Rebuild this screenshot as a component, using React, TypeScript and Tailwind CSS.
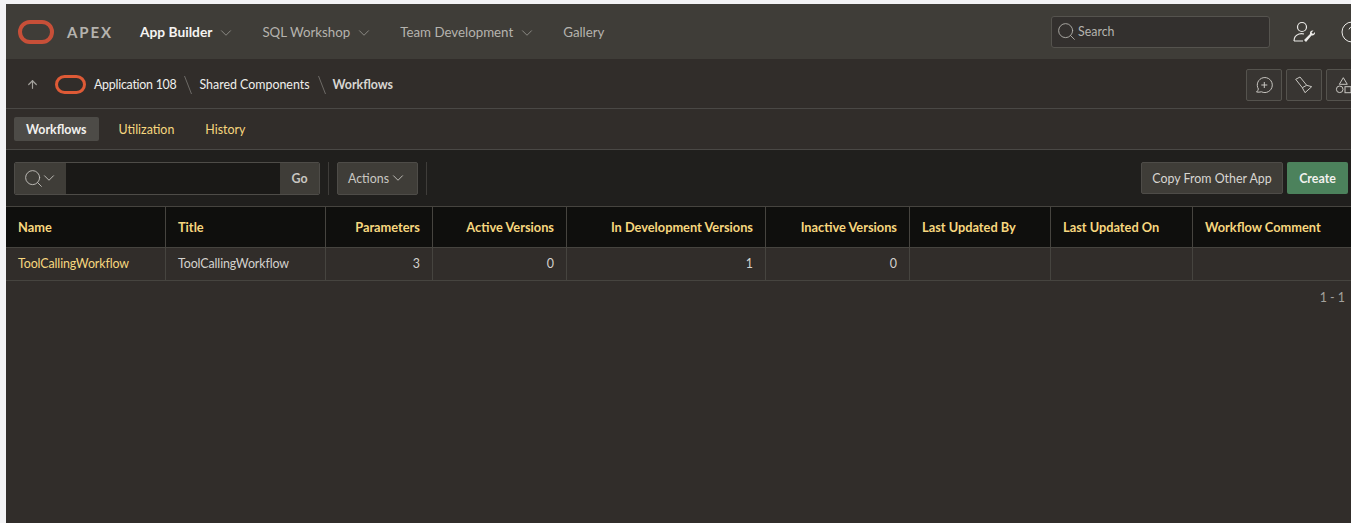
import { ChevronDown, CircleHelp, Search, ArrowUp } from "lucide-react";

const font = { fontFamily: 'Lato, "Noto Sans", sans-serif' };

const Logo = ({ className }: { className: string }) => (
  <div className={className} />
);

const NavItem = ({ label, active }: { label: string; active?: boolean }) => (
  <div className="flex items-center gap-[5px]">
    <span className={active ? "text-[13.75px] font-bold text-[#f5f4f2]" : "text-[#b5b3ae]"}>{label}</span>
    <ChevronDown size={18} strokeWidth={1} className="text-[#a3a19c]" />
  </div>
);

const Slash = () => (
  <svg width="8" height="20" viewBox="0 0 8 20" className="text-[#6e6b67]">
    <path d="M0.5 1 L7.5 19" stroke="currentColor" strokeWidth="1" fill="none" />
  </svg>
);

const IconBtn = ({ children }: { children: React.ReactNode }) => (
  <div className="flex h-[32px] w-[36px] shrink-0 items-center justify-center rounded-[2px] border border-[#55534e] bg-[#383532] text-[#c9c7c2]">
    {children}
  </div>
);

const columns = [
  { label: "Name", w: "w-[160px]" },
  { label: "Title", w: "w-[160px]" },
  { label: "Parameters", w: "w-[107px]", right: true },
  { label: "Active Versions", w: "w-[134px]", right: true },
  { label: "In Development Versions", w: "w-[199px]", right: true },
  { label: "Inactive Versions", w: "w-[144px]", right: true },
  { label: "Last Updated By", w: "w-[141px]" },
  { label: "Last Updated On", w: "w-[142px]" },
  { label: "Workflow Comment", w: "w-[160px]" },
];

const row = ["ToolCallingWorkflow", "ToolCallingWorkflow", "3", "0", "1", "0", "", "", ""];

export default function App() {
  return (
    <div className="h-[523px] w-[1351px] overflow-hidden bg-[#f3f3f5] pl-[6px] pt-[4px] text-[12.4px]" style={font}>
      <div className="flex h-[519px] w-[1345px] flex-col overflow-hidden bg-[#312d2a]">
        {/* top bar */}
        <header className="flex h-[55px] shrink-0 items-center bg-[#3f3d38] pl-[12px]">
          <Logo className="h-[24px] w-[36px] shrink-0 rounded-[12px] border-[4px] border-[#c74f38]" />
          <span className="ml-[13px] pt-[2px] text-[15px] font-bold tracking-[1.9px] text-[#b5b3ae]">APEX</span>
          <nav className="ml-[27px] flex items-center gap-[27px] pt-[2px] text-[13.3px]">
            <NavItem label="App Builder" active />
            <NavItem label="SQL Workshop" />
            <NavItem label="Team Development" />
            <span className="text-[#b5b3ae]">Gallery</span>
          </nav>
          <div className="ml-auto flex h-[32px] w-[219px] shrink-0 items-center rounded-[3px] border border-[#55534e] bg-[#33302e] pl-[4px] text-[#b5b3ae]">
            <Search size={21} strokeWidth={1} />
            <span className="ml-[1px] pt-[2px]">Search</span>
          </div>
          <svg width="24" height="24" viewBox="0 0 24 24" fill="none" className="ml-[22px] shrink-0 text-[#ecebe8]">
            <circle cx="10" cy="7" r="4.500" stroke="currentColor" strokeWidth="1.200" />
            <path d="M2 21c0-4 2-6 5-7 2-.5 3-.5 5 0M2 21h9" stroke="currentColor" strokeWidth="1.200" />
            <path d="M14 22l-2-2 6-6c-.5-2 1-4 3.500-3.500l-2 2 1.500 1.500 2-2c.5 2.500-1.500 4-3.500 3.500z" fill="currentColor" />
          </svg>
          <CircleHelp size={24} strokeWidth={1} className="-mr-[13px] ml-[24px] shrink-0 text-[#ecebe8]" />
        </header>

        {/* breadcrumb */}
        <div className="flex h-[50px] shrink-0 items-center border-b border-[#4a4845] pl-[20px] pt-[2px]">
          <ArrowUp size={13} strokeWidth={2.2} className="text-[#a3a19c]" />
          <Logo className="ml-[16px] h-[19px] w-[31px] shrink-0 rounded-[10px] border-[3px] border-[#de5a36]" />
          <span className="ml-[8px] pt-[2px] tracking-[-0.25px] text-[#f0efec]">Application 108</span>
          <div className="ml-[8px] mr-[7px]"><Slash /></div>
          <span className="pt-[2px] text-[#f0efec]">Shared Components</span>
          <div className="ml-[8px] mr-[7px]"><Slash /></div>
          <span className="pt-[2px] font-bold text-[#d8d6d2]">Workflows</span>
          <div className="-mr-[11px] ml-auto flex gap-[4px]">
            <IconBtn>
              <svg width="18" height="18" viewBox="0 0 18 18" fill="none" stroke="currentColor" strokeWidth="1">
                <path d="M1.500 16c1-.8 1.600-1.800 1.900-3A7.500 7.500 0 1 1 6.500 15.800C5 16.200 3 16.300 1.500 16z" />
                <path d="M9.300 6v6M6.300 9h6" />
              </svg>
            </IconBtn>
            <IconBtn>
              <svg width="20" height="20" viewBox="0 0 20 20" fill="none" stroke="currentColor" strokeWidth="1">
                <path d="M1.700 4.300 6 2l6.700 8.300 5 1.400-6.700 6-2.700-5z" />
                <path d="M8.300 12.700 12.700 10.300" />
              </svg>
            </IconBtn>
            <IconBtn>
              <svg width="20" height="20" viewBox="0 0 20 20" fill="none" stroke="currentColor" strokeWidth="1">
                <path d="M9.300 2.700 13.300 9.300H5.300z" />
                <circle cx="5.700" cy="14.300" r="3.300" />
                <rect x="11" y="11.700" width="6" height="6" />
              </svg>
            </IconBtn>
          </div>
        </div>

        {/* tabs */}
        <div className="flex h-[41px] shrink-0 items-center gap-[8px] border-b border-[#4a4845] pl-[8px] text-[#f7d77f]">
          <div className="flex h-[24px] items-center rounded-[2px] bg-[#4d4b47] px-[12px] pt-[2px] font-bold text-[#f2f1ee]">Workflows</div>
          <div className="pl-[12px] pr-[11px] pt-[2px]">Utilization</div>
          <div className="px-[12px] pt-[2px]">History</div>
        </div>

        {/* toolbar */}
        <div className="flex h-[56px] shrink-0 items-center bg-[#201f1d] pl-[8px] pr-[3px]">
          <div className="flex h-[33px] w-[306px] items-stretch overflow-hidden rounded-[2px] border border-[#4e4c48]">
            <div className="flex w-[51px] items-center justify-center bg-[#3f3d38] text-[#c9c7c2]">
              <Search size={21} strokeWidth={1} />
              <ChevronDown size={18} strokeWidth={1.2} className="-ml-[4px]" />
            </div>
            <div className="flex-1 bg-[#1a1917]" />
            <div className="flex w-[39px] items-center justify-center bg-[#3f3d38] pt-[2px] font-bold text-[#c9c7c2]">Go</div>
          </div>
          <div className="ml-[8px] h-[33px] w-px bg-[#3f3d3a]" />
          <div className="ml-[8px] flex h-[33px] w-[81px] items-center justify-center rounded-[2px] border border-[#4e4c48] bg-[#3f3d38] text-[#c9c7c2]">
            <span className="pt-[2px]">Actions</span>
            <ChevronDown size={18} strokeWidth={1.2} />
          </div>
          <div className="ml-[8px] h-[33px] w-px bg-[#3f3d3a]" />
          <div className="ml-auto flex h-[32px] w-[142px] items-center justify-center rounded-[2px] border border-[#4e4c48] bg-[#3f3d38] pt-[2px] text-[#d8d6d2]">
            Copy From Other App
          </div>
          <div className="ml-[4px] flex h-[32px] w-[61px] items-center justify-center rounded-[2px] bg-[#4c825c] pt-[2px] font-bold text-[#f2f1ee]">
            Create
          </div>
        </div>

        {/* report table */}
        <div className="flex h-[42px] shrink-0 border-y border-[#46443f] bg-[#0f0f0d]">
          {columns.map((c) => (
            <div
              key={c.label}
              className={`flex h-full shrink-0 items-center border-r border-[#46443f] px-[12px] pt-[1px] text-[12.8px] font-bold text-[#f7d77f] ${c.w} ${c.right ? "justify-end" : ""}`}
            >
              <span className="whitespace-nowrap">{c.label}</span>
            </div>
          ))}
        </div>
        <div className="flex h-[33px] shrink-0 border-b border-[#46443f]">
          {columns.map((c, i) => (
            <div
              key={c.label}
              className={`flex h-full shrink-0 items-center border-r border-[#46443f] px-[12px] ${c.w} ${c.right ? "justify-end" : ""} ${i < 2 ? "tracking-[-0.1px]" : ""} ${i === 0 ? "text-[#f7d77f]" : "text-[#d4d2ce]"}`}
            >
              {row[i]}
            </div>
          ))}
        </div>
        <div className="pr-[6px] pt-[8px] text-right text-[#a3a19c]">1 - 1</div>
      </div>
    </div>
  );
}
